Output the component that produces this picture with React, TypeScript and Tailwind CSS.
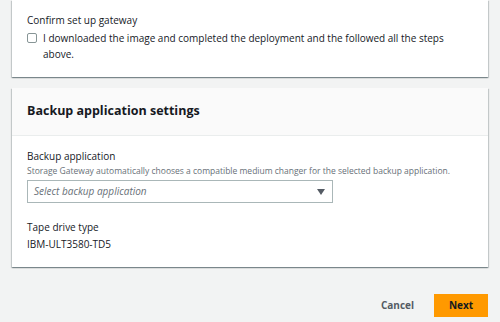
export default function App() {
  return (
    <div className="w-[500px] h-[322px] overflow-hidden bg-[#f2f3f3] px-3 font-['Open_Sans',sans-serif] text-[#16191f]">
      {/* Confirm card */}
      <section className="bg-white shadow-[0_1px_1px_0_rgba(0,28,36,0.3),1px_1px_1px_0_rgba(0,28,36,0.15),-1px_1px_1px_0_rgba(0,28,36,0.15)] px-[15px] pt-3 pb-[15px]">
        <div className="text-[10px] leading-4">Confirm set up gateway</div>
        <label className="mt-[2px] flex items-start gap-[6px] text-[10px] leading-4">
          <span className="mt-[3px] w-[10px] h-[10px] shrink-0 rounded-[2px] border border-[#879596] bg-white" />
          <span className="pr-4">
            I downloaded the image and completed the deployment and the followed all the steps above.
          </span>
        </label>
      </section>

      {/* Backup application settings card */}
      <section className="mt-[11px] bg-white shadow-[0_1px_1px_0_rgba(0,28,36,0.3),1px_1px_1px_0_rgba(0,28,36,0.15),-1px_1px_1px_0_rgba(0,28,36,0.15)]">
        <header className="h-[48px] flex items-center px-[15px] bg-[#fafafa] border-b border-[#eaeded]">
          <h2 className="text-[12.5px] font-bold">Backup application settings</h2>
        </header>
        <div className="px-[15px] pt-[12px] pb-[15px]">
          <div className="text-[10px] leading-4">Backup application</div>
          <div className="text-[8.5px] leading-[14px] text-[#687078]">
            Storage Gateway automatically chooses a compatible medium changer for the selected backup application.
          </div>
          <div className="mt-[2px] w-[306px] h-[23px] border border-[#aab7b8] flex items-center justify-between pl-[6px] pr-[7px]">
            <span className="text-[10px] italic text-[#687078]">Select backup application</span>
            <svg width="8" height="6" viewBox="0 0 8 6" className="text-[#545b64]">
              <path d="M0 0h8L4 6z" fill="currentColor" />
            </svg>
          </div>
          <div className="mt-[16px] text-[10px] leading-4">Tape drive type</div>
          <div className="mt-[1px] text-[10px] leading-4">IBM-ULT3580-TD5</div>
        </div>
      </section>

      {/* Actions */}
      <div className="mt-[27px] flex items-center justify-end gap-[20px]">
        <button className="text-[10px] font-bold text-[#545b64]">Cancel</button>
        <button className="w-[54px] h-[23px] bg-[#ff9900] text-[10px] font-bold text-[#16191f]">Next</button>
      </div>
    </div>
  );
}
